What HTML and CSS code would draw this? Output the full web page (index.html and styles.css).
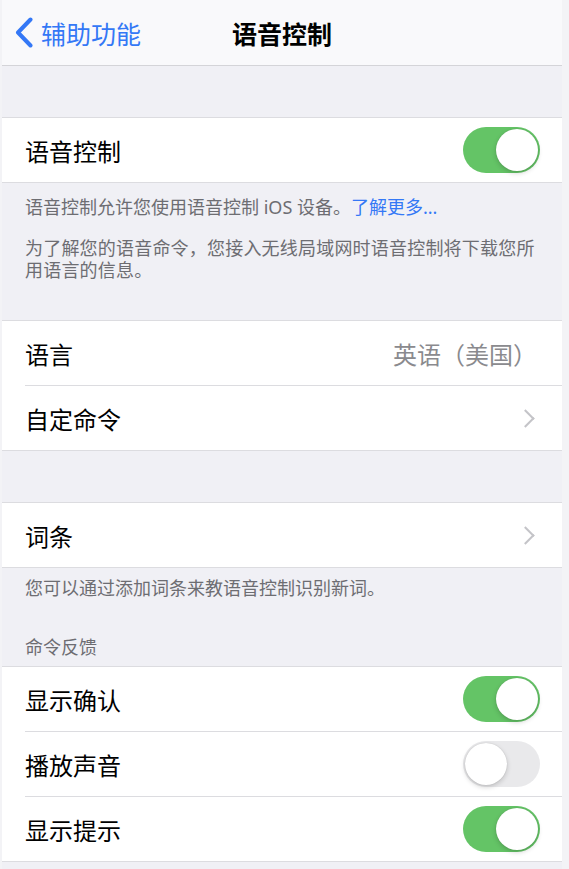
FILE: index.html
```html
<!DOCTYPE html>
<html lang="zh-CN">
<head>
    <meta charset="UTF-8">
    <meta name="viewport" content="width=device-width, initial-scale=1.0">
    <title>语音控制</title>
    <link rel="stylesheet" href="styles.css">
</head>
<body>
    <div class="screen">
        <header class="nav-bar">
            <a class="back" href="#">
                <svg class="back-icon" viewBox="0 0 18 31" width="18" height="31">
                    <path d="M15.5 2.5 L3 15.5 L15.5 28.5" fill="none" stroke="currentColor" stroke-width="4" stroke-linecap="round" stroke-linejoin="round"/>
                </svg>
                <span>辅助功能</span>
            </a>
            <h1>语音控制</h1>
            <span></span>
        </header>

        <div class="gap"></div>

        <section class="group">
            <div class="row">
                <span class="label">语音控制</span>
                <span class="switch on"></span>
            </div>
        </section>
        <div class="group-footer">
            <p>语音控制允许您使用语音控制 iOS 设备。<a href="#">了解更多...</a></p>
            <p>为了解您的语音命令，您接入无线局域网时语音控制将下载您所用语言的信息。</p>
        </div>

        <section class="group">
            <div class="row">
                <span class="label">语言</span>
                <span class="value">英语（美国）</span>
            </div>
            <div class="row">
                <span class="label">自定命令</span>
                <span class="chevron"></span>
            </div>
        </section>

        <div class="gap"></div>

        <section class="group">
            <div class="row">
                <span class="label">词条</span>
                <span class="chevron"></span>
            </div>
        </section>
        <div class="group-footer short">
            <p>您可以通过添加词条来教语音控制识别新词。</p>
        </div>

        <h2 class="group-header">命令反馈</h2>
        <section class="group">
            <div class="row">
                <span class="label">显示确认</span>
                <span class="switch on"></span>
            </div>
            <div class="row">
                <span class="label">播放声音</span>
                <span class="switch"></span>
            </div>
            <div class="row">
                <span class="label">显示提示</span>
                <span class="switch on"></span>
            </div>
        </section>
    </div>
</body>
</html>
```

FILE: styles.css
```css
* {
    margin: 0;
    padding: 0;
    box-sizing: border-box;
}

body {
    background: #f3f3f6;
    font-family: "Noto Sans", "Noto Sans CJK SC", sans-serif;
    color: #000;
}

.screen {
    width: 560px;
    margin-left: 2px;
    min-height: 869px;
    background: #f0f0f5;
}

/* top navigation */
.nav-bar {
    display: grid;
    grid-template-columns: 1fr auto 1fr;
    align-items: center;
    height: 66px;
    background: #f9f9fb;
    border-bottom: 1px solid #d4d4d8;
}

.back {
    display: flex;
    align-items: center;
    gap: 8px;
    padding-left: 13px;
    color: #3478f6;
    font-size: 25px;
    text-decoration: none;
}

.back-icon {
    display: block;
}

.nav-bar h1 {
    font-size: 25px;
    font-weight: 700;
}

.gap {
    height: 51px;
}

/* grouped table */
.group {
    background: #fff;
    border-top: 1px solid #dcdce0;
    border-bottom: 1px solid #dcdce0;
}

.row {
    display: flex;
    align-items: center;
    justify-content: space-between;
    height: 65px;
    margin-left: 23px;
    padding-right: 22px;
    font-size: 24px;
}

.row + .row {
    border-top: 1px solid #dcdce0;
}

.group > .row:first-child {
    height: 64px;
}

.value {
    color: #8a8a8e;
    padding-right: 3px;
}

.chevron {
    width: 13px;
    height: 13px;
    margin-right: 8px;
    border-top: 2px solid #c4c4c8;
    border-right: 2px solid #c4c4c8;
    transform: rotate(45deg);
}

/* toggle */
.switch {
    position: relative;
    width: 77px;
    height: 46px;
    border-radius: 23px;
    background: #e9e9eb;
}

.switch::after {
    content: "";
    position: absolute;
    top: 2px;
    left: 2px;
    width: 42px;
    height: 42px;
    border-radius: 50%;
    background: #fff;
    box-shadow: 0 2px 5px rgba(0, 0, 0, 0.18), 0 0 1px rgba(0, 0, 0, 0.2);
}

.switch.on {
    background: #64c466;
}

.switch.on::after {
    left: 33px;
}

/* footers and headers */
.group-footer {
    padding: 13px 23px 39px;
    color: #6d6d72;
    font-size: 18px;
    line-height: 22px;
}

.group-footer p + p {
    margin-top: 19px;
    letter-spacing: 0.2px;
}

.group-footer a {
    color: #3478f6;
    text-decoration: none;
}

.group-footer.short {
    padding: 9px 23px 37px;
}

.group-header {
    padding: 0 23px 8px;
    color: #6d6d72;
    font-size: 18px;
    font-weight: 400;
    line-height: 22px;
}
```
